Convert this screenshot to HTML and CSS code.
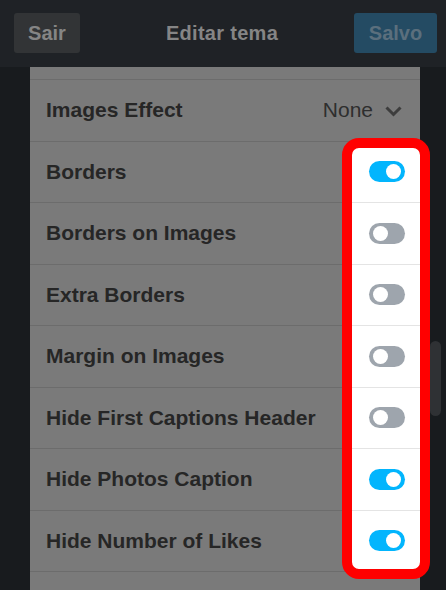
FILE: index.html
```html
<!DOCTYPE html>
<html lang="pt">
<head>
<meta charset="utf-8">
<title>Editar tema</title>
<link rel="stylesheet" href="styles.css">
</head>
<body>
<header class="topbar">
  <button class="btn btn-exit">Sair</button>
  <h1 class="title">Editar tema</h1>
  <button class="btn btn-save">Salvo</button>
</header>
<main class="main">
  <section class="panel">
    <div class="row row-partial"></div>
    <div class="row">
      <span class="label">Images Effect</span>
      <span class="select">None
        <svg class="chevron" width="17" height="11" viewBox="0 0 17 11"><path d="M1.5 1.5 L8.5 8.5 L15.5 1.5" fill="none" stroke="#3d3d3d" stroke-width="3"/></svg>
      </span>
    </div>
    <div class="row"><span class="label">Borders</span><span class="cell"><span class="toggle on"></span></span></div>
    <div class="row"><span class="label">Borders on Images</span><span class="cell"><span class="toggle"></span></span></div>
    <div class="row"><span class="label">Extra Borders</span><span class="cell"><span class="toggle"></span></span></div>
    <div class="row"><span class="label">Margin on Images</span><span class="cell"><span class="toggle"></span></span></div>
    <div class="row"><span class="label">Hide First Captions Header</span><span class="cell"><span class="toggle"></span></span></div>
    <div class="row"><span class="label">Hide Photos Caption</span><span class="cell"><span class="toggle on"></span></span></div>
    <div class="row"><span class="label">Hide Number of Likes</span><span class="cell"><span class="toggle on"></span></span></div>
    <div class="row row-last"></div>
    <div class="highlight"></div>
  </section>
  <div class="scrolltrack"><div class="thumb"></div></div>
</main>
</body>
</html>
```
FILE: styles.css
```css
* { box-sizing: border-box; }
html, body { margin: 0; padding: 0; }
body {
  width: 446px;
  height: 590px;
  overflow: hidden;
  background: #181b1e;
  font-family: "Liberation Sans", Arial, sans-serif;
}
.topbar {
  height: 67px;
  background: #1f2226;
  display: flex;
  align-items: center;
  justify-content: space-between;
  padding: 0 9px 1px 14px;
}
.btn {
  border: none;
  border-radius: 3px;
  height: 40px;
  font-family: inherit;
  font-weight: bold;
  font-size: 20px;
  padding: 0;
}
.btn-exit {
  width: 66px;
  background: #323436;
  color: #858585;
}
.btn-save {
  width: 83px;
  background: #244b63;
  color: #5b6f7d;
}
.title {
  margin: 0 0 0 10px;
  font-size: 20px;
  font-weight: bold;
  color: #858585;
  letter-spacing: 0.3px;
}
.main {
  display: flex;
  padding-left: 30px;
}
.panel {
  position: relative;
  width: 390px;
  height: 523px;
  background: #7a7a7a;
}
.row {
  height: 61.5px;
  border-bottom: 1px solid #6c6c6c;
  display: flex;
  align-items: center;
  justify-content: space-between;
  padding-left: 16px;
}
.row-partial { height: 13px; }
.row-last { height: 18px; border-bottom: none; }
.label {
  font-size: 21px;
  font-weight: bold;
  color: #262626;
}
.select {
  display: flex;
  align-items: center;
  gap: 12px;
  padding-right: 18px;
  font-size: 21px;
  color: #2e2e2e;
}
.chevron { margin-top: 3px; }
.cell {
  align-self: stretch;
  width: 68px;
  margin-bottom: -1px;
  background: #ffffff;
  border-bottom: 1px solid #e4e4e4;
  display: flex;
  align-items: center;
  justify-content: center;
  padding-left: 2px;
}
.toggle {
  position: relative;
  width: 36px;
  height: 21px;
  border-radius: 11px;
  background: #9ea5ad;
}
.toggle::after {
  content: "";
  position: absolute;
  top: 3px;
  left: 4px;
  width: 15px;
  height: 15px;
  border-radius: 50%;
  background: #ffffff;
}
.toggle.on { background: #02b5fd; }
.toggle.on::after { left: 17px; }
.highlight {
  position: absolute;
  left: 312px;
  top: 71px;
  width: 88px;
  height: 441px;
  border: 10px solid #ff0000;
  border-radius: 17px;
  pointer-events: none;
}
.scrolltrack {
  width: 26px;
  padding: 274px 5px 0 10px;
}
.thumb {
  width: 11px;
  height: 75px;
  border-radius: 6px;
  background: #2f3134;
}
```
